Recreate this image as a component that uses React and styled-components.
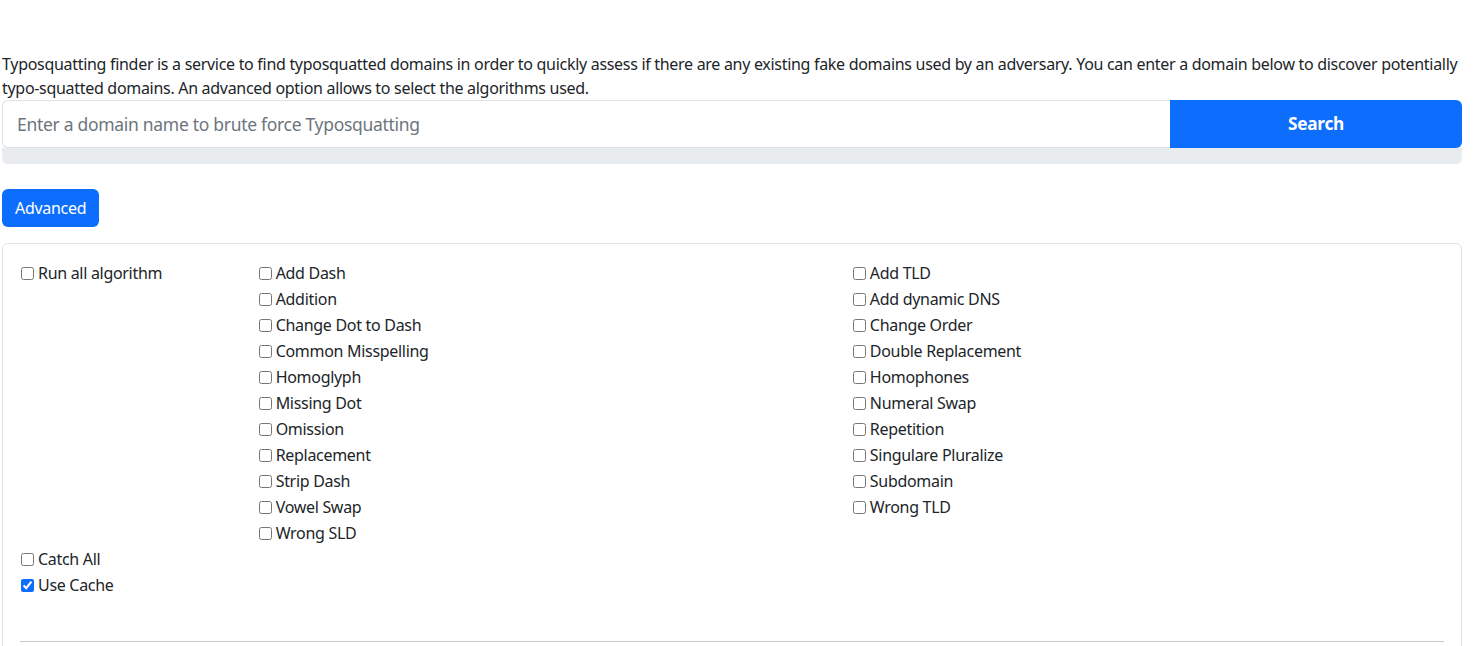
import React, { useState } from 'react';
import styled, { createGlobalStyle } from 'styled-components';

const GlobalStyle = createGlobalStyle`
  body {
    margin: 0;
    background: #fff;
    color: #212529;
    font-family: "Noto Sans", "Liberation Sans", sans-serif;
    font-size: 16px;
    line-height: 24px;
    letter-spacing: -0.3px;
  }
  * { box-sizing: border-box; }
`;

const Page = styled.div`
  width: 1460px;
  margin-left: 2px;
  padding-top: 52px;
`;

const Intro = styled.p`
  margin: 0;
`;

const InputGroup = styled.div`
  display: flex;
  height: 48px;
`;

const DomainInput = styled.input`
  flex: 1;
  min-width: 0;
  height: 48px;
  padding: 0 14px;
  border: 1px solid #dee2e6;
  border-right: none;
  border-radius: 6px 0 0 6px;
  font: inherit;
  font-size: 17.5px;
  letter-spacing: inherit;
  color: #212529;
  outline: none;

  &::placeholder {
    color: #6c757d;
  }
`;

const SearchButton = styled.button`
  width: 20%;
  border: none;
  border-radius: 0 6px 6px 0;
  background: #0d6efd;
  color: #fff;
  font: inherit;
  font-size: 17.3px;
  font-weight: 700;
  letter-spacing: inherit;
  cursor: pointer;
`;

const Progress = styled.div`
  height: 16px;
  background: #e9ecef;
  border-radius: 0 0 6px 6px;
`;

const AdvancedButton = styled.button`
  margin-top: 25px;
  height: 38px;
  padding: 0 13px;
  border: none;
  border-radius: 6px;
  background: #0d6efd;
  color: #fff;
  font: inherit;
  letter-spacing: inherit;
  cursor: pointer;
`;

const Card = styled.div`
  margin-top: 16px;
  border: 1px solid #dee2e6;
  border-radius: 6px;
  padding: 17px 16px 40px;
`;

const Columns = styled.div`
  display: grid;
  grid-template-columns: 2fr 5fr 5fr;
`;

const Column = styled.div`
  display: flex;
  flex-direction: column;
`;

const Check = styled.label`
  display: flex;
  align-items: center;
  height: 24px;
  margin-bottom: 2px;
  cursor: pointer;
  white-space: nowrap;
`;

const Box = styled.input`
  width: 13px;
  height: 13px;
  margin: 1px 4px 0 2px;
  accent-color: #0d6efd;
`;

const Divider = styled.hr`
  margin: 44px 1px 0;
  border: none;
  border-top: 1px solid #c9c9c9;
`;

const colA = [
  'Add Dash', 'Addition', 'Change Dot to Dash', 'Common Misspelling', 'Homoglyph',
  'Missing Dot', 'Omission', 'Replacement', 'Strip Dash', 'Vowel Swap', 'Wrong SLD',
];

const colB = [
  'Add TLD', 'Add dynamic DNS', 'Change Order', 'Double Replacement', 'Homophones',
  'Numeral Swap', 'Repetition', 'Singulare Pluralize', 'Subdomain', 'Wrong TLD',
];

const Option = ({ label, checked, onToggle }) => (
  <Check>
    <Box type="checkbox" checked={!!checked} onChange={() => onToggle(label)} />
    {label}
  </Check>
);

export default function App() {
  const [selected, setSelected] = useState({ 'Use Cache': true });
  const toggle = (label) => setSelected((s) => ({ ...s, [label]: !s[label] }));

  return (
    <>
      <GlobalStyle />
      <Page>
        <Intro>
          Typosquatting finder is a service to find typosquatted domains in order to quickly assess if there are any existing fake domains used by an adversary. You can enter a domain below to discover potentially typo-squatted domains. An advanced option allows to select the algorithms used.
        </Intro>
        <InputGroup>
          <DomainInput placeholder="Enter a domain name to brute force Typosquatting" />
          <SearchButton>Search</SearchButton>
        </InputGroup>
        <Progress />

        <AdvancedButton>Advanced</AdvancedButton>

        <Card>
          <Columns>
            <Column>
              <Option label="Run all algorithm" checked={selected['Run all algorithm']} onToggle={toggle} />
            </Column>
            <Column>
              {colA.map((l) => (
                <Option key={l} label={l} checked={selected[l]} onToggle={toggle} />
              ))}
            </Column>
            <Column>
              {colB.map((l) => (
                <Option key={l} label={l} checked={selected[l]} onToggle={toggle} />
              ))}
            </Column>
          </Columns>
          <Option label="Catch All" checked={selected['Catch All']} onToggle={toggle} />
          <Option label="Use Cache" checked={selected['Use Cache']} onToggle={toggle} />
          <Divider />
        </Card>
      </Page>
    </>
  );
}
